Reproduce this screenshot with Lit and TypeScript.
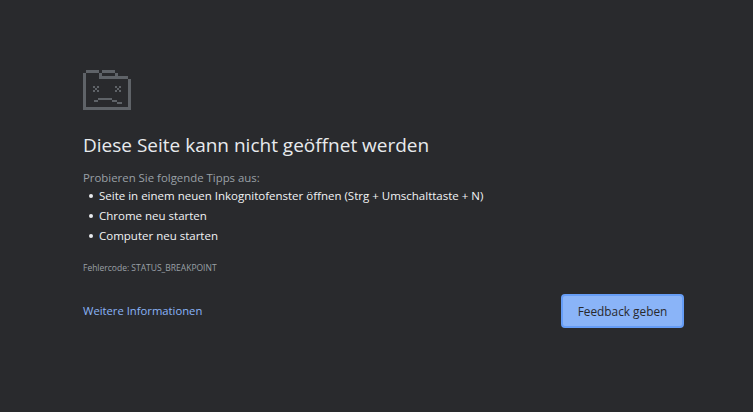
import { LitElement, html, css } from "lit";
import { customElement } from "lit/decorators.js";

@customElement("app-root")
export class AppRoot extends LitElement {
  static styles = css`
    :host { display: block; height: 412px; background: #292a2d; overflow: hidden;
      font-family: "Open Sans", "Noto Sans", sans-serif; }
    .page { display: flex; flex-direction: column; padding: 70px 69px 0 83px; }
    .icon { display: block; width: 48px; height: 40px; margin-bottom: 21px; }
    h1 { margin: 0 0 11px; font-size: 19px; font-weight: 400; line-height: 28px; color: #e8eaed; }
    .lead { font-size: 11.4px; line-height: 16px; color: #9aa0a6; }
    ul { margin: 0; padding: 0 0 0 16px; list-style: none; display: flex; flex-direction: column; }
    li { font-size: 11.5px; line-height: 20px; color: #f1f3f4; position: relative; }
    li::before { content: ""; position: absolute; left: -10px; top: 8px; width: 4px; height: 4px; border-radius: 50%; background: #e8eaed; }
    .code { margin-top: 16px; font-size: 8.5px; line-height: 12px; color: #9aa0a6; }
    .actions { display: flex; justify-content: space-between; align-items: center; margin-top: 20px; }
    a { font-size: 11.25px; color: #8ab4f8; text-decoration: none; margin-bottom: 1px; }
    button { width: 123px; height: 34px; box-sizing: border-box; border: 2px solid #669df6; border-radius: 4px;
      background: #8ab4f8; color: #292a2d; font: inherit; font-size: 11.85px; font-weight: 500; padding: 0; }
  `;

  render() {
    return html`<div class="page">
      <svg class="icon" viewBox="0 0 48 40" fill="#5f6368" shape-rendering="crispEdges">
        <rect x="0" y="3" width="3" height="37"/>
        <rect x="3" y="0" width="13" height="3"/>
        <rect x="19" y="0" width="13" height="3"/>
        <rect x="16" y="3" width="3" height="6"/>
        <rect x="32" y="3" width="3" height="3"/>
        <rect x="19" y="6" width="26" height="3"/>
        <rect x="45" y="9" width="3" height="31"/>
        <rect x="3" y="37" width="42" height="3"/>
        <path d="M10 16h2v2h-2zM14 16h2v2h-2zM12 18h2v2h-2zM10 20h2v2h-2zM14 20h2v2h-2zM32 16h2v2h-2zM36 16h2v2h-2zM34 18h2v2h-2zM32 20h2v2h-2zM36 20h2v2h-2z"/>
        <path d="M11 30h4v2h-4zM15 28h14v2H15zM29 30h5v2h-5zM34 32h5v2h-5z"/>
      </svg>
      <h1>Diese Seite kann nicht geöffnet werden</h1>
      <div class="lead">Probieren Sie folgende Tipps aus:</div>
      <ul>
        <li>Seite in einem neuen Inkognitofenster öffnen (Strg + Umschalttaste + N)</li>
        <li>Chrome neu starten</li>
        <li>Computer neu starten</li>
      </ul>
      <div class="code">Fehlercode: STATUS_BREAKPOINT</div>
      <div class="actions">
        <a href="#">Weitere Informationen</a>
        <button>Feedback geben</button>
      </div>
    </div>`;
  }
}
